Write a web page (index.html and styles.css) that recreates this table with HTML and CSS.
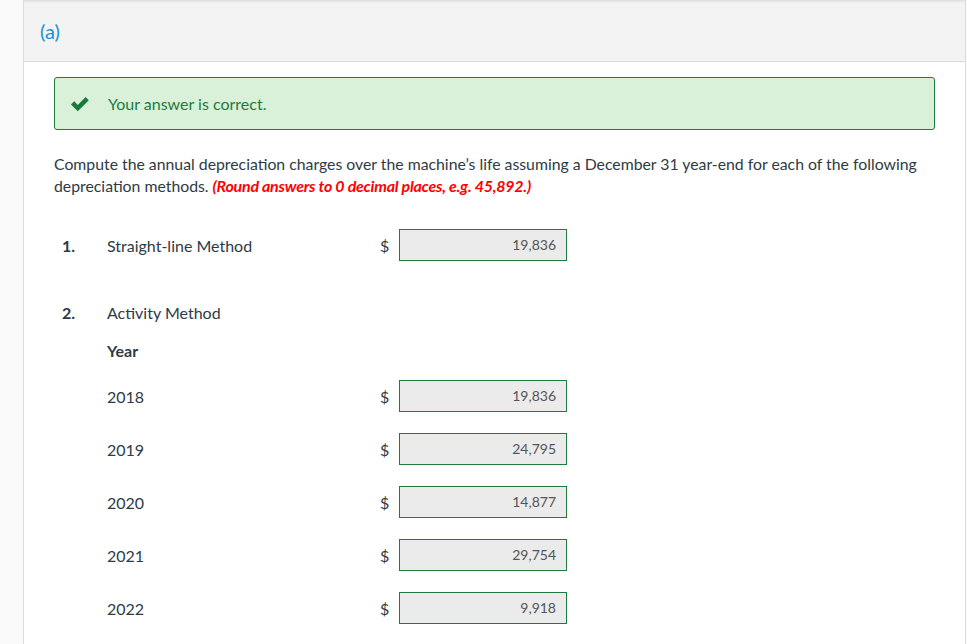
FILE: index.html
```html
<!DOCTYPE html>
<html>
<head>
<meta charset="utf-8">
<link rel="stylesheet" href="styles.css">
</head>
<body>
<div class="panel">
  <div class="header"><span class="part">(a)</span></div>
  <div class="content">
    <div class="correct">
      <svg class="check" width="20" height="16" viewBox="0 0 20 16"><path d="M1 8.5 L4.2 5.3 L7.8 8.9 L15.6 1.1 L18.8 4.3 L7.8 15.3 Z" fill="#1a7a3a"/></svg>
      <span>Your answer is correct.</span>
    </div>
    <p class="question">Compute the annual depreciation charges over the machine’s life assuming a December 31 year-end for each of the following depreciation methods. <em class="note">(Round answers to 0 decimal places, e.g. 45,892.)</em></p>
    <div class="rows">
      <div class="row r1">
        <span class="num">1.</span><span class="label">Straight-line Method</span><span class="cur">$</span><span class="box">19,836</span>
      </div>
      <div class="row r2">
        <span class="num">2.</span><span class="label">Activity Method</span>
      </div>
      <div class="row ryear">
        <span class="num"></span><span class="label bold">Year</span>
      </div>
      <div class="row rfirst">
        <span class="num"></span><span class="label">2018</span><span class="cur">$</span><span class="box">19,836</span>
      </div>
      <div class="row rnext">
        <span class="num"></span><span class="label">2019</span><span class="cur">$</span><span class="box">24,795</span>
      </div>
      <div class="row rnext">
        <span class="num"></span><span class="label">2020</span><span class="cur">$</span><span class="box">14,877</span>
      </div>
      <div class="row rnext">
        <span class="num"></span><span class="label">2021</span><span class="cur">$</span><span class="box">29,754</span>
      </div>
      <div class="row rnext">
        <span class="num"></span><span class="label">2022</span><span class="cur">$</span><span class="box">9,918</span>
      </div>
    </div>
  </div>
</div>
</body>
</html>
```
FILE: styles.css
```css
html, body {
  margin: 0;
  padding: 0;
  background: #fafafa;
  font-family: Lato, "Liberation Sans", sans-serif;
  height: 644px;
  overflow: hidden;
}
.panel {
  margin-left: 23px;
  width: 941px;
  min-height: 644px;
  background: #fff;
  border-left: 1px solid #dcdcdc;
  border-right: 1px solid #dcdcdc;
}
.header {
  height: 61px;
  background: #f3f3f3;
  border-bottom: 1px solid #dcdcdc;
  box-shadow: inset 0 3px 3px -2px rgba(0,0,0,0.12);
  display: flex;
  align-items: center;
  padding-left: 16px;
}
.part {
  color: #1a8fd8;
  font-size: 20px;
}
.content {
  padding: 15px 30px 0 30px;
}
.correct {
  height: 51px;
  border: 1px solid #1e7b3d;
  border-radius: 3px;
  background: #d8f1d8;
  display: flex;
  align-items: center;
  color: #1e7b3d;
  font-size: 16px;
}
.check {
  margin-left: 15px;
  margin-right: 18px;
}
.question {
  margin: 23px 0 0 0;
  font-size: 15.8px;
  line-height: 22px;
  color: #2d3b45;
}
.note {
  color: #ff0000;
  font-size: 16px;
  font-weight: bold;
  font-style: italic;
  letter-spacing: -0.25px;
  padding-right: 2px;
}
.rows {
  margin-top: 32px;
}
.row {
  display: grid;
  grid-template-columns: 53px 273px 19px 168px;
  height: 32px;
  align-items: center;
  font-size: 16px;
  color: #2d3b45;
}
.r2 { margin-top: 35px; }
.ryear { margin-top: 6px; }
.rfirst { margin-top: 14px; }
.rnext { margin-top: 21px; }
.num {
  padding-left: 8px;
  font-weight: bold;
}
.bold { font-weight: bold; }
.box {
  box-sizing: border-box;
  height: 32px;
  border: 1px solid #1e7b3d;
  background: #ebebeb;
  text-align: right;
  padding-right: 10px;
  line-height: 30px;
  font-size: 14px;
  color: #555;
}
```
